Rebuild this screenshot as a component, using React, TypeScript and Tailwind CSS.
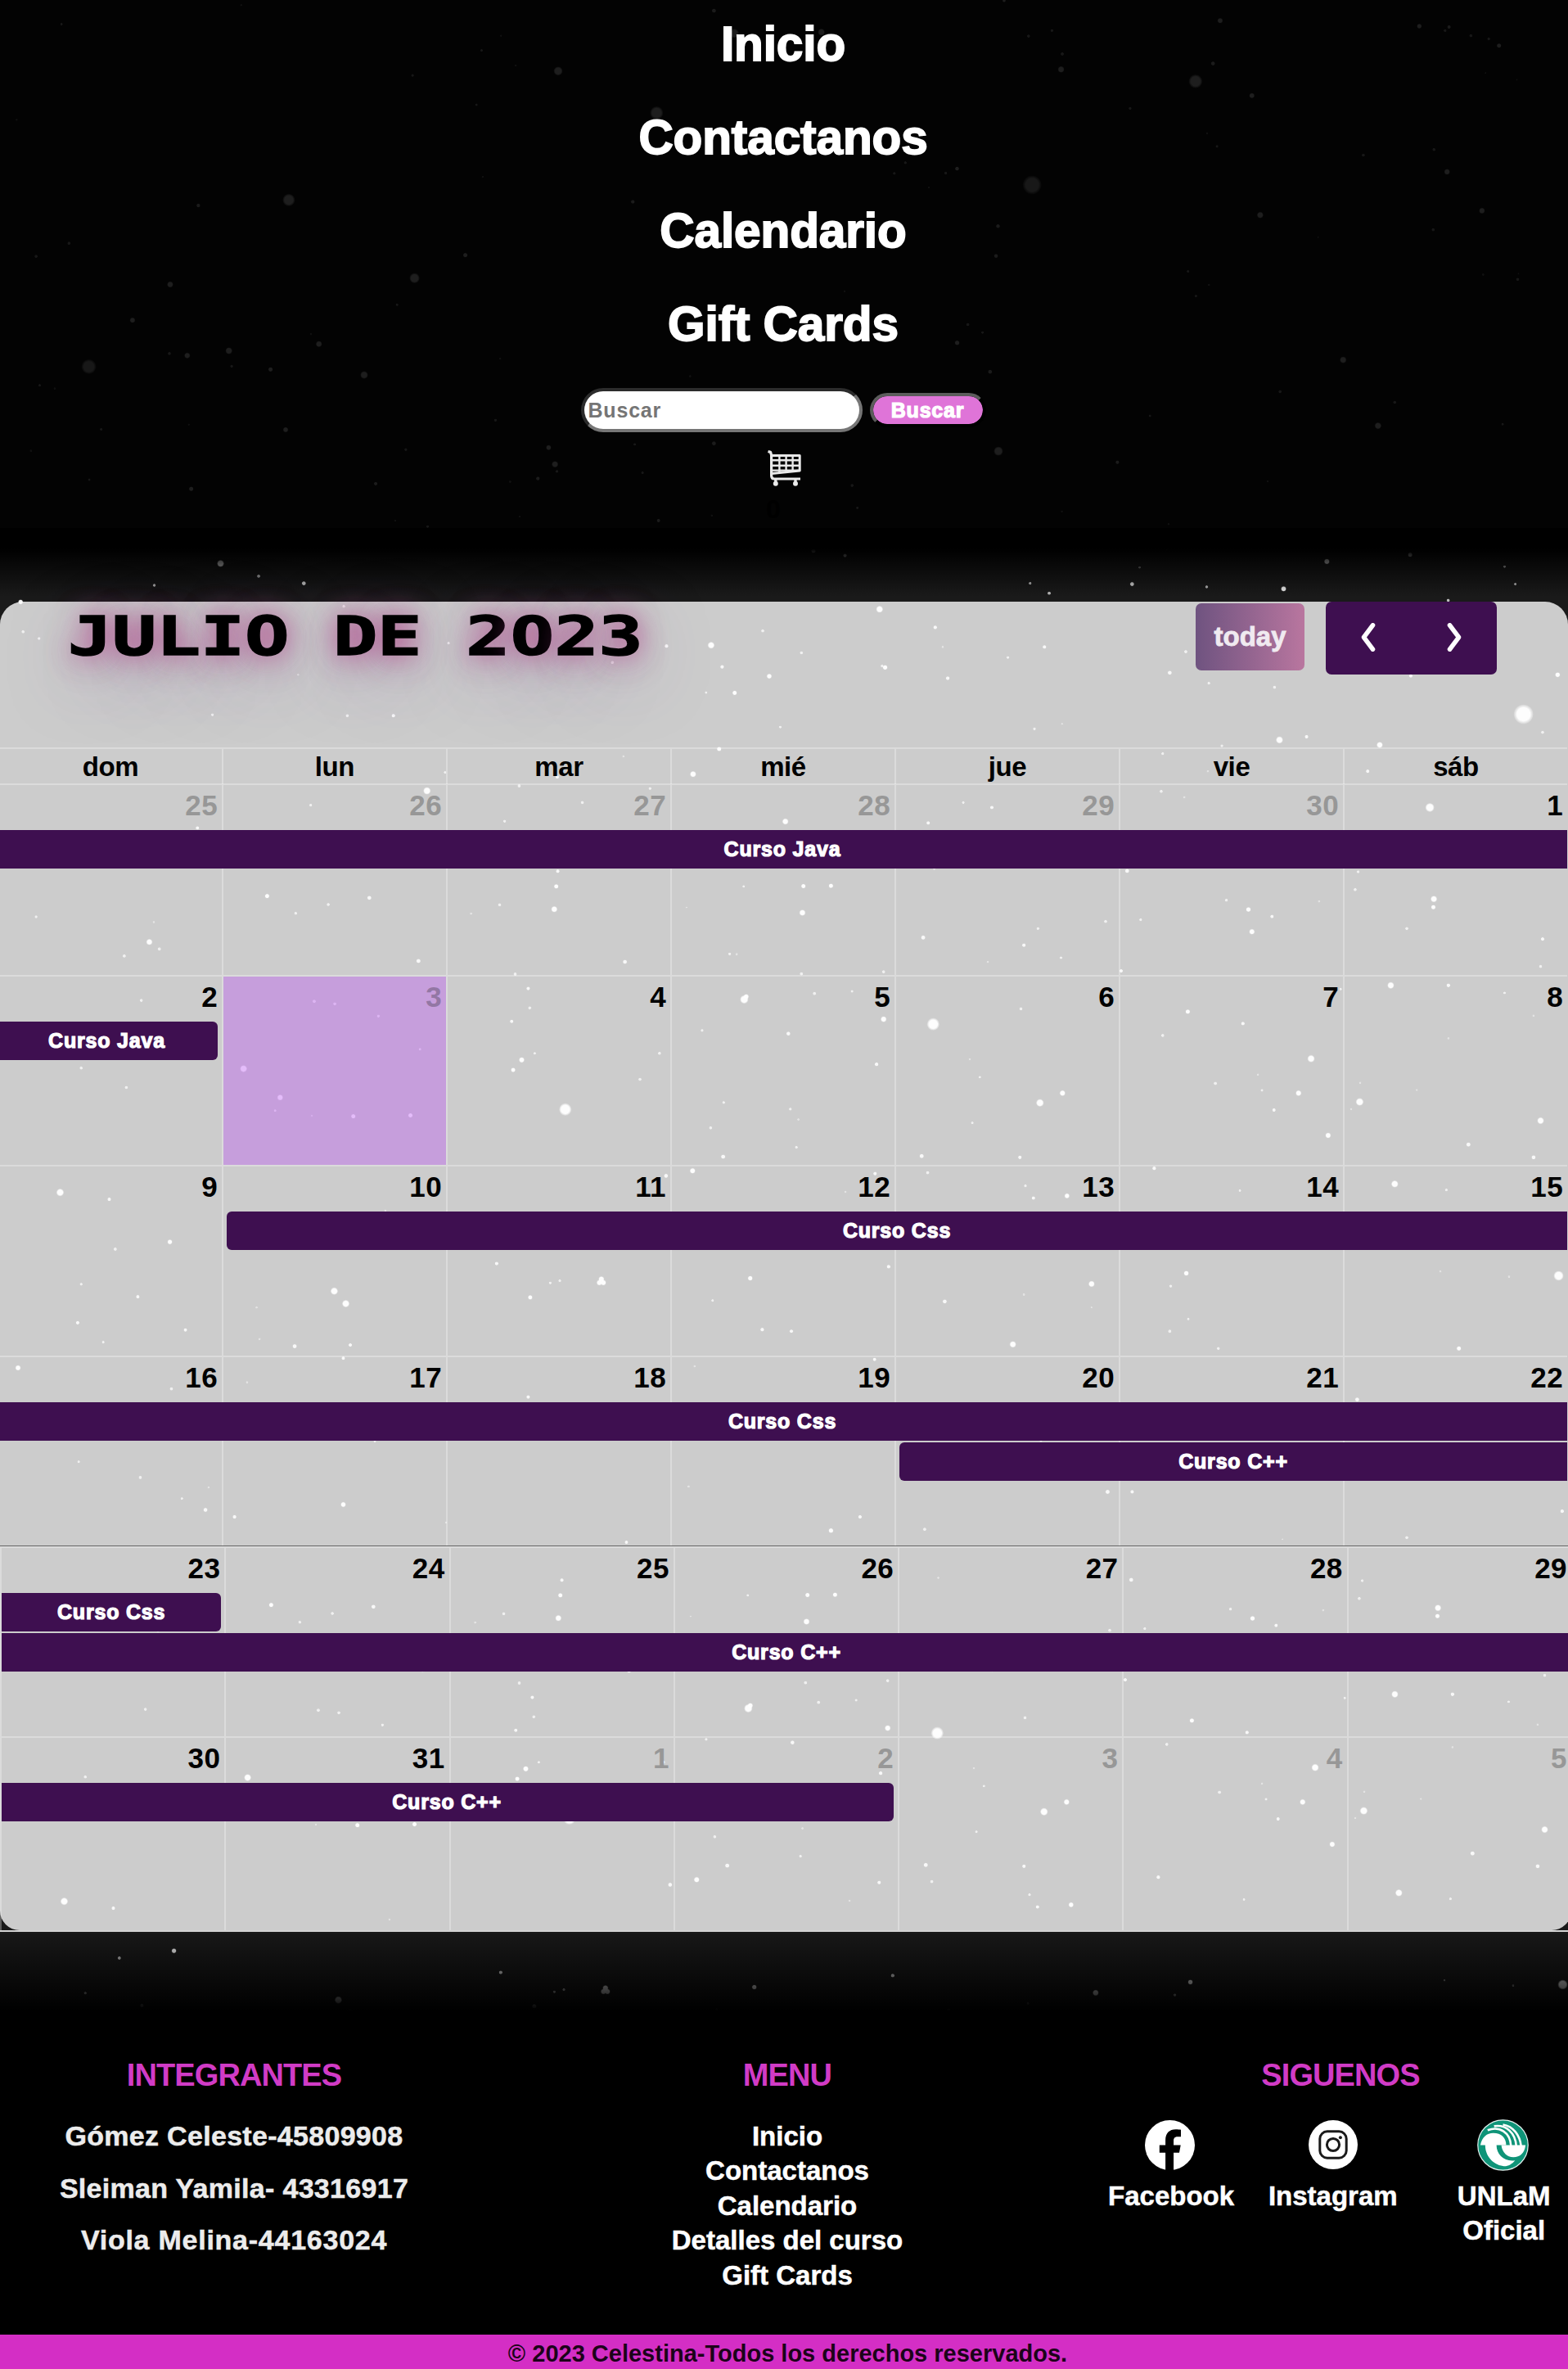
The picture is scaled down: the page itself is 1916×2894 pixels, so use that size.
import React from 'react';

const FONT = "font-['Liberation_Sans',Arial,sans-serif]";

type Star = [number, number, number];
type Tile = { x: number; y: number; sx: number; sy: number; stars: Star[] };

/* Star field, stored as tiles: each has an origin, a scale and its points (x, y, radius). */
const TILES: Tile[] = [
  {
    x: 0, y: 0, sx: 2.063, sy: 2.063,
    stars: [
      [155, 61, 1.8], [608, 13, 1.5], [1263, 90, 1.5], [1214, 127, 1.8], [1300, 165, 1.6], [1407, 179, 5.8], [1040, 190, 2],
      [1201, 264, 1.8], [42, 302, 1.5], [1217, 446, 1.4], [500, 518, 2.6], [728, 504, 8], [174, 613, 2.2], [91, 646, 2.2],
      [1173, 643, 3], [429, 717, 4], [1045, 701, 6.6], [1001, 768, 1.8], [334, 807, 3.5], [784, 842, 1.6], [804, 867, 4],
      [427, 891, 2.2], [472, 896, 3.8], [577, 884, 4.5], [584, 923, 2], [682, 931, 3], [918, 945, 5], [224, 924, 9.5],
      [100, 971, 1.8], [138, 979, 1.6], [1261, 904, 1.5], [255, 1082, 1.8], [476, 1070, 1.4], [720, 1083, 3.4], [1023, 1133, 2],
      [1249, 1059, 2], [1383, 1128, 3.4], [1399, 1170, 4.2], [1404, 1188, 2], [1356, 1206, 2.6], [1286, 1214, 1.7], [78, 1136, 1.7],
      [225, 1209, 1.8], [482, 1232, 3], [947, 1219, 2.4], [996, 1312, 1.5], [1078, 1327, 1.8], [1310, 1302, 1.4],
      [556, 1420, 4.6], [652, 1452, 2.3], [389, 1475, 2.1], [766, 1470, 2.8], [52, 1517, 3.2],
    ],
  },
  {
    x: 660, y: 0, sx: 2.613, sy: 2.45,
    stars: [
      [555, 32, 2.8], [372, 338, 8.5], [620, 100, 6], [898, 96, 4.5], [1482, 2, 2], [296, 604, 2.6], [1131, 519, 2], [1166, 487, 2],
      [1295, 518, 2], [1331, 505, 2.6], [1241, 561, 1.4], [972, 872, 1.4], [479, 1126, 1.7], [555, 1327, 2.8],
      [327, 1415, 1.9], [302, 1330, 1.8], [996, 1453, 2.2], [1013, 1520, 1.8], [378, 1558, 2.4], [548, 1543, 1.6],
    ],
  },
  {
    x: 1156, y: 0, sx: 2.063, sy: 2.063,
    stars: [
      [146, 2, 2], [691, 52, 3.5], [267, 77, 2], [208, 91, 2.2], [293, 136, 2.3], [290, 175, 4.2], [629, 205, 8.8], [673, 160, 2.8],
      [771, 241, 3.5], [464, 273, 2], [658, 336, 1.6], [683, 369, 1.9], [28, 425, 2.6], [217, 466, 12], [131, 570, 2.7],
      [126, 645, 2.7], [792, 542, 4.2], [1193, 66, 3.2], [1268, 68, 2.4], [1258, 77, 2], [1323, 90, 2.2], [1368, 98, 2],
      [1394, 115, 3], [1360, 184, 1.2], [1439, 201, 1.2], [1052, 391, 2.2], [1230, 377, 2.2], [1263, 433, 3.8], [1351, 531, 3.8],
      [1228, 579, 2.2], [938, 598, 1.2], [610, 684, 1.8], [663, 718, 1.6], [630, 746, 1.8], [1354, 692, 1.7], [1441, 704, 2.2],
      [1443, 690, 1.2], [55, 818, 2.2], [92, 838, 1.8], [28, 864, 3.2], [111, 937, 2.8], [1001, 907, 4.3], [842, 987, 2.2],
      [514, 1048, 1.8], [1131, 1014, 2.2], [1089, 1073, 4.4], [1403, 1069, 1.8], [132, 1137, 6], [432, 1165, 2.5], [811, 1213, 1.4],
      [292, 1289, 1.5], [561, 1321, 1.5], [556, 1384, 1.5], [960, 1415, 3.6], [1170, 1398, 3], [488, 1430, 1.7], [469, 1472, 2.8],
      [212, 1470, 2], [260, 1495, 2.3], [657, 1479, 2.1], [851, 1484, 3.5], [1408, 1428, 1.8], [1435, 1472, 1.8], [1266, 1513, 2.2],
    ],
  },
  {
    x: 0, y: 640, sx: 1.633, sy: 2.8,
    stars: [
      [46, 369, 2.2], [78, 392, 2], [1522, 366, 2.2], [1330, 418, 2.6], [1419, 415, 4.4], [1441, 489, 2.6], [1535, 521, 3.3],
      [1466, 578, 3], [1409, 577, 1.8], [1557, 695, 1.8], [895, 408, 2], [686, 282, 2.1], [1222, 474, 2.2], [595, 516, 1.6],
      [424, 653, 2], [693, 656, 2.2], [785, 656, 2.5], [1435, 770, 3], [1383, 856, 4], [1244, 795, 1.6], [1112, 866, 2.4],
      [852, 913, 4.8], [888, 850, 1.8], [1036, 896, 2.3], [1297, 905, 2], [1162, 953, 2.2], [620, 962, 2], [1007, 1017, 2],
      [394, 1040, 2.4], [1113, 1188, 2.5], [1110, 1240, 3], [1106, 1318, 4], [533, 1273, 3], [737, 1279, 2.8], [655, 1302, 2.2],
      [590, 1332, 2.1], [997, 1303, 2.2], [940, 1333, 1.7], [1484, 1240, 1.8], [1370, 1312, 1.2], [72, 1344, 2], [307, 1362, 1.6],
      [298, 1430, 4], [318, 1454, 2.3], [248, 1478, 2.3], [835, 1495, 2.9], [1247, 1498, 2.8], [1456, 1471, 2], [1470, 1472, 1.7], [1028, 1540, 2.3],
    ],
  },
  {
    x: 956, y: 640, sx: 1.633, sy: 2.8,
    stars: [
      [62, 92, 3], [125, 108, 2.5], [194, 292, 4.5], [305, 354, 2.6], [38, 441, 2.2], [320, 421, 1.6], [450, 457, 1.9], [523, 421, 2.5], [205, 491, 3.2],
      [199, 486, 2], [330, 528, 2.6], [503, 701, 2], [558, 684, 1.4], [805, 437, 2.3], [773, 509, 2.8], [851, 545, 2], [982, 559, 2.2],
      [1254, 520, 2.4], [1547, 516, 3.3], [1479, 651, 12.5], [1517, 713, 2.2], [992, 739, 4.6], [1046, 728, 2.5], [1192, 756, 4],
      [877, 759, 2], [759, 786, 2], [849, 846, 1.6], [1168, 846, 2.4], [1292, 970, 5.8], [756, 915, 2.2], [802, 935, 1.7], [361, 953, 1.9],
      [418, 970, 2.4], [291, 1023, 2.4], [6, 1018, 4], [303, 1180, 1.6], [688, 1187, 2.8], [1149, 1190, 2], [1143, 1251, 2.2],
      [1300, 1283, 4.2], [1299, 1311, 3], [42, 1239, 3], [97, 1238, 3], [40, 1330, 4], [886, 1287, 2.1], [930, 1319, 3.2],
      [977, 1343, 2.4], [1071, 1291, 1.7], [937, 1395, 3.6], [715, 1354, 2], [645, 1360, 2.2], [510, 1384, 2], [281, 1415, 2.9],
      [482, 1441, 2.5], [410, 1498, 1.7], [556, 1484, 1.9], [1246, 1384, 2.2], [1517, 1420, 2.4], [1513, 1514, 2.2], [38, 1539, 2.3],
      [202, 1532, 2.2], [676, 1529, 2.4],
    ],
  },
  {
    x: 0, y: 1180, sx: 1.633, sy: 2.613,
    stars: [
      [282, 110, 2.2], [162, 326, 2.2], [252, 388, 2.2], [627, 113, 2.3], [668, 121, 2.2], [755, 160, 2], [838, 266, 1.8], [486, 328, 4.6],
      [559, 420, 3.8], [549, 462, 1.8], [622, 478, 1.5], [705, 480, 3], [819, 477, 3], [1054, 72, 2.5], [1057, 134, 2.2], [1021, 177, 2.4],
      [1067, 279, 1.8], [1041, 300, 3.6], [1024, 332, 3], [1128, 458, 8], [1316, 279, 2.2], [1277, 362, 2.2], [1485, 107, 5.4],
      [1489, 98, 3.4], [1401, 206, 2], [1444, 436, 2], [1418, 517, 2.2], [1443, 609, 2.9], [1382, 654, 3.6], [1329, 670, 2.8],
      [120, 723, 4.9], [218, 745, 2.5], [339, 881, 3.2], [230, 904, 2.3], [162, 1016, 2], [275, 1056, 2.4], [155, 1139, 2.4],
      [370, 1162, 2.4], [206, 1201, 1.9], [769, 781, 1.6], [667, 1038, 4.8], [690, 1078, 4.8], [512, 1090, 1.6], [518, 1191, 1.6],
      [588, 1214, 2.9], [699, 1210, 2.4], [685, 1252, 2.4], [991, 950, 2.5], [1098, 1012, 1.9], [1117, 1005, 2], [1200, 1000, 3.8],
      [1196, 1011, 3.6], [1204, 1011, 3.6], [1058, 1058, 3], [1497, 997, 3.2], [1422, 1068, 1.9], [1521, 1161, 2.6], [36, 1283, 3.5],
      [342, 1350, 2.3], [493, 1329, 1.6], [1054, 1376, 2.5], [1386, 1278, 1.6], [748, 1517, 1.8],
    ],
  },
  {
    x: 956, y: 1180, sx: 1.633, sy: 2.613,
    stars: [
      [64, 88, 2.3], [139, 81, 1.9], [202, 170, 3.8], [301, 186, 8], [12, 216, 2.7], [476, 137, 2.2], [188, 314, 2.6], [374, 298, 1.6],
      [394, 355, 1.8], [559, 406, 3.7], [514, 437, 5], [379, 501, 1.9], [16, 457, 2], [32, 490, 1.7], [28, 579, 2], [278, 607, 2.9],
      [474, 611, 2.5], [290, 660, 2.3], [185, 663, 2.5], [485, 702, 2], [501, 741, 2.4], [568, 734, 3.3], [126, 721, 1.6],
      [809, 146, 3], [919, 184, 2.5], [759, 222, 2.2], [1055, 296, 4.7], [949, 347, 1.6], [864, 375, 2.3], [957, 397, 1.9],
      [1030, 406, 3.7], [981, 460, 2.4], [1089, 541, 3.6], [1152, 434, 5], [1153, 373, 1.6], [1135, 457, 1.5], [1114, 74, 1.8],
      [1214, 62, 4.4], [1329, 62, 2.6], [1441, 86, 1.8], [1499, 159, 1.7], [1329, 231, 1.6], [1266, 396, 1.4], [1513, 494, 4.4],
      [1369, 570, 2.9], [1499, 611, 2.8], [742, 646, 2.6], [913, 717, 1.8], [1222, 696, 4.6], [1325, 715, 1.9], [212, 960, 2.6],
      [806, 981, 3.3], [617, 1015, 4], [775, 1022, 2.1], [324, 1071, 2.8], [482, 1049, 1.7], [617, 1090, 1.2], [18, 1166, 2.4],
      [810, 1127, 1.8], [773, 1166, 2.3], [460, 1208, 4.2], [870, 1221, 2.1], [1350, 1221, 3], [1313, 975, 1.6], [1450, 992, 1.7],
      [1549, 989, 6.4], [184, 1256, 2.4], [1147, 1384, 2.8], [516, 1515, 2],
    ],
  },
  {
    x: 0, y: 1780, sx: 1.633, sy: 2.45,
    stars: [
      [157, 14, 1.9], [280, 61, 2.3], [416, 91, 1.5], [363, 124, 1.8], [410, 158, 2.8], [468, 179, 2.6], [685, 142, 3.4], [890, 196, 1.5],
      [1374, 88, 1.7], [1250, 255, 2.4],
    ],
  },
  {
    x: 956, y: 1780, sx: 1.633, sy: 2.45,
    stars: [[155, 179, 2.5], [97, 220, 3.2], [284, 216, 2.3], [649, 104, 2.9], [698, 104, 2.5], [1556, 162, 2.6], [1246, 241, 2.2], [998, 246, 1.2]],
  },
];

const BASE: Star[] = TILES.flatMap((t) =>
  t.stars.map(([x, y, r]): Star => [t.x + x / t.sx, t.y + y / t.sy, r]),
);

/* The field repeats further down the page. */
const ECHO: Star[] = BASE.filter(([, y]) => y > 1024 && y < 1625).map(([x, y, r]): Star => [x + 5, y + 866, r]);

function Sky() {
  return (
    <svg className="absolute inset-0 h-[2894px] w-[1916px]" viewBox="0 0 1916 2894" aria-hidden="true">
      <defs>
        <radialGradient id="glow">
          <stop offset="0.68" stopColor="#fff" />
          <stop offset="1" stopColor="#fff" stopOpacity="0.15" />
        </radialGradient>
      </defs>
      {[...BASE, ...ECHO].map(([x, y, r], i) => (
        <circle key={i} cx={x} cy={y} r={r * 0.95} fill="url(#glow)" opacity={r < 1.8 ? 0.45 : r < 2.4 ? 0.7 : r < 3 ? 0.85 : y < 640 && r > 9 ? 0.75 : 0.95} />
      ))}
    </svg>
  );
}

function CartIcon() {
  return (
    <svg className="h-[44px] w-[41px]" viewBox="0 0 41 44" fill="none" stroke="#e9e9e9" strokeWidth="2.2" strokeLinejoin="round">
      <path d="M0.5 1.5 L3.6 2.4 L4.6 6 V31 Q4.6 35 8 35 H40" strokeWidth="3.2" />
      <path d="M4.6 6.4 H39.2 V25 L5 28.6" strokeWidth="3" />
      <path d="M14.4 6V27 M22.6 6V26 M30.6 6V25.5 M5 12.2H39 M5 18.8H39 M6 24.6H39" strokeWidth="2.4" />
      <circle cx="9.8" cy="40.800" r="3" fill="#e9e9e9" stroke="none" />
      <circle cx="34" cy="40.800" r="3" fill="#e9e9e9" stroke="none" />
      <path d="M9.8 35v5 M34 35v5" strokeWidth="3.4" />
    </svg>
  );
}

function FacebookIcon() {
  return (
    <svg className="h-[61px] w-[61px]" viewBox="0 0 60 60">
      <circle cx="30" cy="30" r="30" fill="#fff" />
      <path
        fill="#000"
        d="M24.7 61V39H17.5V30H24.7V24C24.7 15.5 29.5 11 37 11C39.5 11 42 11.3 43.3 11.5V20H39.3C35.5 20 34.5 22.2 34.5 24.8V30H43L41.3 39H34.5V61Z"
      />
    </svg>
  );
}

function InstagramIcon() {
  return (
    <svg className="h-[60px] w-[60px]" viewBox="0 0 60 60">
      <circle cx="30" cy="30" r="30" fill="#fff" />
      <g fill="none" stroke="#1a1a1a" strokeWidth="3">
        <rect x="13.8" y="13.8" width="32.4" height="32.4" rx="9" />
        <circle cx="30" cy="30" r="7.6" />
      </g>
      <circle cx="38.9" cy="21.3" r="2" fill="#1a1a1a" />
    </svg>
  );
}

function UnlamIcon() {
  return (
    <svg className="h-[63px] w-[63px]" viewBox="0 0 64 64">
      <circle cx="32" cy="32" r="31.2" fill="#0f9478" stroke="#e4f3f0" strokeWidth="1.2" />
      <path fill="#fff" d="M4 32C6 22 12 17 20 17C30 17 36 23 36 32H24C24 44 34 53 47 51C43 56 37 59 32 58C19 56 10 45 10 32Z" />
      <path fill="#fff" d="M30 32H60C59 42 53 47 45 47C37 47 31 41 30 32Z" />
      <g fill="none" stroke="#fff" strokeWidth="2.6">
        <path d="M13 13.500C28 8 41 16 42 33" />
        <path d="M21 8.500C36 6 47.500 17 48.500 33" />
        <path d="M32 6.500C45 8.500 53 20 54.500 33" />
      </g>
    </svg>
  );
}

const NAV = ['Inicio', 'Contactanos', 'Calendario', 'Gift Cards'];

function Header() {
  return (
    <header className="relative flex h-[645px] flex-col items-center bg-black/88">
      <nav className="-mt-[3.500px] mr-[2px] flex flex-col items-center">
        {NAV.map((item) => (
          <a key={item} className="h-[114px] text-[58.500px] leading-[114px] font-bold tracking-[-0.1px] text-white [-webkit-text-stroke:1.8px_white]">
            {item}
          </a>
        ))}
      </nav>
      <div className="mt-[21.500px] mr-[2px] flex h-[54px] items-start gap-[10px]">
        <input
          placeholder="Buscar"
          className="h-[54px] w-[344px] rounded-full border-4 border-t-[#2c2c2c] border-r-[#767676] border-b-[#767676] border-l-[#2c2c2c] bg-white px-[5px] text-[25px] font-bold tracking-[0.8px] text-[#757575] outline-none placeholder:text-[#757575]"
        />
        <button className="mt-[6px] -ml-px h-[42px] w-[142px] rounded-full border-4 border-t-[#5c5c5c] border-r-black border-b-black border-l-[#5c5c5c] bg-[#df74d8] bg-clip-padding text-[25px] leading-[34px] font-bold tracking-[0.8px] text-white [-webkit-text-stroke:1.2px_white]">
          Buscar
        </button>
      </div>
      <div className="mt-[22px]">
        <CartIcon />
      </div>
      <span className="mt-[10px] mr-[26px] text-[32px] leading-[36px] font-bold text-black">0</span>
      <div className="absolute inset-x-0 top-full h-[84px] bg-linear-to-b from-black from-30% to-transparent" />
    </header>
  );
}

type Day = { n: number; out?: boolean; today?: boolean };
type Course = { title: string; place: string };
type Week = { height: string; days: Day[]; events: Course[] };

const range = (from: number, to: number, out = false): Day[] =>
  Array.from({ length: to - from + 1 }, (_, i) => ({ n: from + i, out }));

const FIRST_WEEKS: Week[] = [
  { height: 'h-[234px]', days: [...range(25, 30, true), { n: 1 }], events: [{ title: 'Curso Java', place: 'col-span-7' }] },
  {
    height: 'h-[232px]',
    days: [{ n: 2 }, { n: 3, today: true }, ...range(4, 8)],
    events: [{ title: 'Curso Java', place: 'col-span-1 mr-[5px] rounded-r-[6px] pr-[2px]' }],
  },
  { height: 'h-[233px]', days: range(9, 15), events: [{ title: 'Curso Css', place: 'col-span-6 col-start-2 ml-[6px] rounded-l-[6px]' }] },
  {
    height: 'h-[232px]',
    days: range(16, 22),
    events: [
      { title: 'Curso Css', place: 'col-span-7' },
      { title: 'Curso C++', place: 'col-span-3 col-start-5 ml-[6px] rounded-l-[6px]' },
    ],
  },
];

const LAST_WEEKS: Week[] = [
  {
    height: 'h-[232px]',
    days: range(23, 29),
    events: [
      { title: 'Curso Css', place: 'col-span-1 ml-[2px] mr-[4px] rounded-r-[6px]' },
      { title: 'Curso C++', place: 'col-span-7 ml-[2px]' },
    ],
  },
  {
    height: 'h-[237px]',
    days: [...range(30, 31), ...range(1, 5, true)],
    events: [{ title: 'Curso C++', place: 'col-span-4 ml-[2px] mr-[5px] rounded-r-[6px] pr-[2px]' }],
  },
];

function WeekRow({ week }: { week: Week }) {
  return (
    <div className={`relative grid grid-cols-7 ${week.height}`}>
      {week.days.map((d, i) => (
        <div
          key={i}
          className={`border-t-2 border-l-2 border-white/30 bg-clip-padding pr-[5px] text-right text-[35px] leading-[49px] font-bold tracking-[0.4px] ${
            d.today ? 'bg-[rgba(189,91,244,0.4)]' : ''
          } ${d.out ? 'text-[#979797]' : d.today ? 'text-[#9377a4]' : 'text-black'}`}
        >
          {d.n}
        </div>
      ))}
      <div className="absolute inset-x-0 top-[57px] grid grid-cols-7 gap-y-[2px]">
        {week.events.map((e, i) => (
          <div
            key={i}
            className={`h-[47px] bg-[#3e0f50] text-center text-[25px] leading-[46px] font-bold tracking-[0.8px] text-white [-webkit-text-stroke:1.2px_white] ${e.place}`}
          >
            {e.title}
          </div>
        ))}
      </div>
    </div>
  );
}

const DOW = ['dom', 'lun', 'mar', 'mié', 'jue', 'vie', 'sáb'];

function Title() {
  return (
    <h2 className="mt-[3px] ml-[83px] h-[80px] w-[517px] origin-left scale-x-[1.36] font-['DejaVu_Sans_Mono',monospace] text-[66px] leading-[80px] font-bold whitespace-pre text-black [-webkit-text-stroke:1.5px_black] [text-shadow:0_0_26px_rgba(176,66,136,0.8),0_4px_36px_rgba(176,66,136,0.45),0_20px_70px_rgba(110,70,150,0.5)]">
      {'JULIO DE 2'}
      <span className="inline-block w-[0.602em] text-center font-['Noto_Sans',sans-serif] leading-none">0</span>
      {'23'}
    </h2>
  );
}

function Calendar() {
  return (
    <main className="relative mt-[90px]">
      <section className="rounded-t-[28px] bg-white/78">
        <div className="flex h-[178px] items-start">
          <Title />
          <div className="ml-auto flex items-start pr-[87px]">
            <button className="mt-[2px] h-[82px] w-[133px] rounded-[7px] bg-linear-to-r from-[#6f5380] to-[#b9769f] text-[33px] leading-[76px] font-bold text-[#f0eaf0] [-webkit-text-stroke:0.8px_#f0eaf0]">
              today
            </button>
            <div className="ml-[26px] flex h-[89px] w-[209px] items-center rounded-[7px] bg-[#3e0f50]">
              {['M17 3 L5 19 L17 35', 'M5 3 L17 19 L5 35'].map((d) => (
                <button key={d} className="flex flex-1 justify-center pb-[3px]">
                  <svg className="h-[35px] w-[22px]" viewBox="0 0 22 38" fill="none" stroke="#fff" strokeWidth="6" strokeLinecap="round" strokeLinejoin="round">
                    <path d={d} />
                  </svg>
                </button>
              ))}
            </div>
          </div>
        </div>
        <div className="-ml-[3px] w-[1918px]">
          <div className="grid h-[44px] grid-cols-7">
            {DOW.map((d) => (
              <div key={d} className="border-t-2 border-l-2 border-white/30 text-center text-[33px] leading-[43px] font-bold tracking-[-0.4px] text-black">
                {d}
              </div>
            ))}
          </div>
          {FIRST_WEEKS.map((w, i) => (
            <WeekRow key={i} week={w} />
          ))}
        </div>
      </section>
      <div className="h-px bg-[#666]" />
      <section className="w-[1920px] border-b-2 border-[#d4d4d4]">
        <div className="rounded-b-[24px] bg-white/78">
          {LAST_WEEKS.map((w, i) => (
            <WeekRow key={i} week={w} />
          ))}
        </div>
      </section>
    </main>
  );
}

const LINKS = ['Inicio', 'Contactanos', 'Calendario', 'Detalles del curso', 'Gift Cards'];

function Heading({ children }: { children: React.ReactNode }) {
  return <h3 className="text-[38px] leading-[50px] font-bold tracking-[-0.9px] text-[#d13bc6]">{children}</h3>;
}

function Footer() {
  return (
    <footer className="relative mt-[120px] h-[414px] bg-black">
      <div className="absolute inset-x-0 bottom-full h-[118px] bg-linear-to-t from-black from-20% to-black/10" />
      <div className="flex h-[372px] pt-[30px] text-center font-bold text-white">
        <div className="ml-[41px] w-[490px]">
          <Heading>INTEGRANTES</Heading>
          <ul className="mt-[18px] text-[34px] leading-[63.600px] tracking-[0.3px] text-[#ececec] [-webkit-text-stroke:0.5px_#ececec]">
            <li>Gómez Celeste-45809908</li>
            <li>Sleiman Yamila- 43316917</li>
            <li className="tracking-[0.75px]">Viola Melina-44163024</li>
          </ul>
        </div>
        <div className="ml-[181px] w-[500px]">
          <Heading>MENU</Heading>
          <ul className="mt-[29px] text-[33px] leading-[42.400px] [-webkit-text-stroke:0.5px_white]">
            {LINKS.map((l) => (
              <li key={l}>{l}</li>
            ))}
          </ul>
        </div>
        <div className="ml-[120px] w-[580px]">
          <div className="ml-[6px] w-[600px]">
            <Heading>SIGUENOS</Heading>
          </div>
          <div className="mt-[28px] flex text-[33px] leading-[42px] [-webkit-text-stroke:0.5px_white]">
            <a className="flex w-[200px] flex-col items-center">
              <span className="mr-[3px] flex h-[64px] items-center"><FacebookIcon /></span>
              <span className="mt-[10px]">Facebook</span>
            </a>
            <a className="flex w-[199px] flex-col items-center">
              <span className="flex h-[64px] items-center"><InstagramIcon /></span>
              <span className="mt-[10px]">Instagram</span>
            </a>
            <a className="ml-[36px] flex w-[150px] flex-col items-center">
              <span className="mr-[2px] flex h-[64px] items-center"><UnlamIcon /></span>
              <span className="mt-[10px]">UNLaM Oficial</span>
            </a>
          </div>
        </div>
      </div>
      <div className="h-[42px] bg-[#d42ec5] text-center text-[29px] leading-[47px] font-bold text-[#1c0319]">
        <span className="mr-[-9px]">© 2023 Celestina-Todos los derechos reservados.</span>
      </div>
    </footer>
  );
}

export default function App() {
  return (
    <div className={`relative h-[2894px] w-[1916px] overflow-hidden bg-[#1a1a1a] ${FONT}`}>
      <Sky />
      <Header />
      <Calendar />
      <Footer />
    </div>
  );
}
